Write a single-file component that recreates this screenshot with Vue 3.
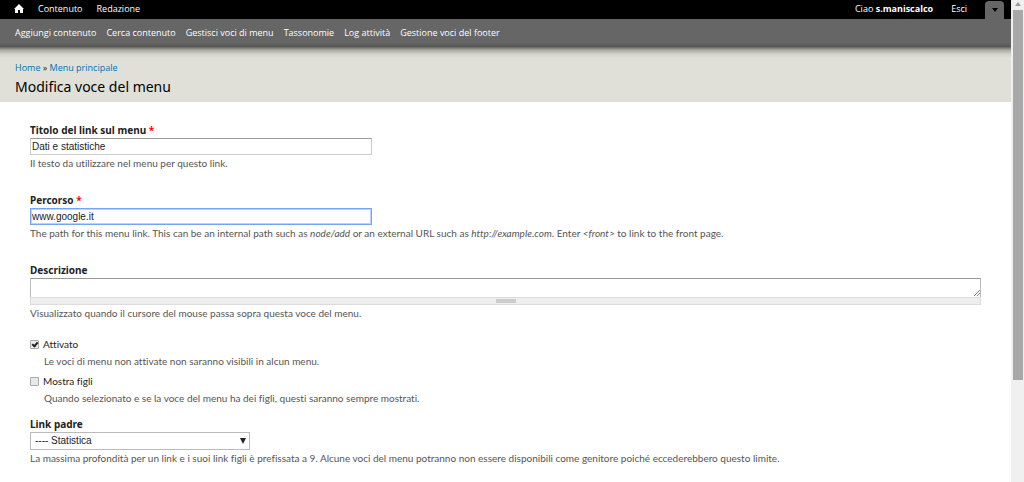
<script setup>
import { ref } from 'vue'

const mainLinks = ['Contenuto', 'Redazione']
const shortcuts = [
  'Aggiungi contenuto',
  'Cerca contenuto',
  'Gestisci voci di menu',
  'Tassonomie',
  'Log attività',
  'Gestione voci del footer',
]
const title = ref('Dati e statistiche')
const path = ref('www.google.it')
const description = ref('')
const enabled = ref(true)
const expanded = ref(false)
const parent = ref('statistica')
</script>

<template>
  <div class="window">
    <div class="page">
      <nav class="toolbar">
        <a class="home" href="#" aria-label="Home">
          <svg width="10" height="9" viewBox="0 0 10 9"><path d="M5 0 0 5h1v4h3V6h2v3h3V5h1z" fill="#fff" /></svg>
        </a>
        <a v-for="l in mainLinks" :key="l" href="#">{{ l }}</a>
        <div class="user">
          <a href="#">Ciao <strong>s.maniscalco</strong></a>
          <a href="#">Esci</a>
          <button class="toggle" type="button" aria-label="Scorciatoie">
            <svg width="6" height="4" viewBox="0 0 6 4"><path d="M0 0h6L3 4z" fill="#000" /></svg>
          </button>
        </div>
      </nav>
      <nav class="drawer">
        <a v-for="s in shortcuts" :key="s" href="#">{{ s }}</a>
      </nav>
      <header class="branding">
        <div class="crumbs"><a href="#">Home</a> » <a href="#">Menu principale</a></div>
        <h1>Modifica voce del menu</h1>
      </header>
      <form class="content" @submit.prevent>
        <div class="item">
          <label class="label" for="title">Titolo del link sul menu <span class="req">*</span></label>
          <input id="title" v-model="title" class="text" type="text" />
          <p class="help">Il testo da utilizzare nel menu per questo link.</p>
        </div>
        <div class="item">
          <label class="label" for="path">Percorso <span class="req">*</span></label>
          <input id="path" v-model="path" class="text active" type="text" />
          <p class="help">The path for this menu link. This can be an internal path such as <em>node/add</em> or an external URL such as <em>http://example.com</em>. Enter <em>&lt;front&gt;</em> to link to the front page.</p>
        </div>
        <div class="item area-item">
          <label class="label" for="description">Descrizione</label>
          <div class="area">
            <textarea id="description" v-model="description" rows="1"></textarea>
            <svg class="corner" width="6" height="6" viewBox="0 0 6 6"><path d="M0 6 6 0M3 6 6 3" stroke="#777" fill="none" /></svg>
            <div class="grippie"><span></span></div>
          </div>
          <p class="help">Visualizzato quando il cursore del mouse passa sopra questa voce del menu.</p>
        </div>
        <div class="check-item">
          <div class="check-row">
            <input id="enabled" v-model="enabled" type="checkbox" />
            <label for="enabled">Attivato</label>
          </div>
          <p class="help">Le voci di menu non attivate non saranno visibili in alcun menu.</p>
        </div>
        <div class="check-item">
          <div class="check-row">
            <input id="expanded" v-model="expanded" type="checkbox" />
            <label for="expanded">Mostra figli</label>
          </div>
          <p class="help">Quando selezionato e se la voce del menu ha dei figli, questi saranno sempre mostrati.</p>
        </div>
        <div class="parent-item">
          <label class="label" for="parent">Link padre</label>
          <div class="select">
            <select id="parent" v-model="parent">
              <option value="statistica">---- Statistica</option>
            </select>
            <svg width="6" height="6" viewBox="0 0 6 6"><path d="M0 0h6L3 6z" fill="#222" /></svg>
          </div>
          <p class="help">La massima profondità per un link e i suoi link figli è prefissata a 9. Alcune voci del menu potranno non essere disponibili come genitore poiché eccederebbero questo limite.</p>
        </div>
      </form>
    </div>
    <div class="scrollbar" aria-hidden="true">
      <svg width="6" height="4" viewBox="0 0 6 4"><path d="M0 4h6L3 0z" fill="#999" /></svg>
      <div class="thumb"></div>
    </div>
  </div>
</template>

<style>
body {
  background: #fff;
}
</style>

<style scoped>
.window {
  display: flex;
  min-height: 100vh;
  font: 10px/14px Lato, "Noto Sans", sans-serif;
  font-variant-ligatures: none;
  color: #222;
}
.page {
  flex: 1;
  min-width: 0;
}
a {
  color: inherit;
  text-decoration: none;
}
.toolbar {
  display: flex;
  align-items: center;
  height: 19px;
  padding: 0 7px 0 14px;
  gap: 14px;
  background: #000;
  color: #fff;
  font: 9px/14px "Open Sans", sans-serif;
}
.toolbar a {
  padding-bottom: 2px;
}
.home svg {
  display: block;
}
.user {
  display: flex;
  align-items: center;
  align-self: stretch;
  gap: 18px;
  margin-left: auto;
}
.toggle {
  display: flex;
  align-items: center;
  justify-content: center;
  align-self: flex-end;
  width: 19px;
  height: 18px;
  padding: 0;
  border: 0;
  border-radius: 4px 4px 0 0;
  background: #666;
}
.drawer {
  display: flex;
  align-items: center;
  gap: 10px;
  height: 28px;
  padding: 0 15px;
  background: linear-gradient(#666 24px, #555);
  color: #fff;
  font: 9px/14px "Open Sans", sans-serif;
}
.branding {
  padding: 14px 15px 4px;
  background: linear-gradient(#66665f, #a8a8a2 3px, #d2d2cb 7px, #e0e0d8 11px);
}
.crumbs {
  font: 9px/14px "Open Sans", sans-serif;
}
.crumbs a {
  color: #0071b3;
}
h1 {
  margin: 1px 0 0;
  font: 14px/22px "Noto Sans", sans-serif;
  color: #000;
}
.content {
  padding: 21px 30px 0;
}
.item {
  margin-bottom: 23px;
}
.area-item {
  margin-bottom: 17px;
}
.label {
  display: block;
  padding-bottom: 1px;
  font: bold 10px/14px "Noto Sans", sans-serif;
}
.req {
  color: #f00;
}
.help {
  margin: 1px 0 0;
  color: #555;
}
.text {
  display: block;
  box-sizing: border-box;
  width: 342px;
  height: 17px;
  padding: 0 1px;
  border: 1px solid #ccc;
  border-top-color: #999;
  outline: 0;
  color: #222;
  font: 10px/14px "Liberation Sans", Arial, sans-serif;
}
.active {
  border-color: #76a4f0;
  box-shadow: inset 0 0 0 1px #bcd2f7;
}
.area {
  position: relative;
}
textarea {
  display: block;
  box-sizing: border-box;
  width: 100%;
  height: 19px;
  padding: 1px 2px;
  border: 1px solid #bbb;
  border-top-color: #999;
  border-bottom: 0;
  outline: 0;
  resize: none;
  overflow: hidden;
  font: 10px/14px "Liberation Sans", Arial, sans-serif;
}
.corner {
  position: absolute;
  right: 1px;
  top: 12px;
}
.grippie {
  display: flex;
  align-items: center;
  justify-content: center;
  box-sizing: border-box;
  height: 8px;
  margin-bottom: 1px;
  border: 1px solid #ddd;
  background: #eee;
}
.grippie span {
  width: 20px;
  height: 4px;
  background: #ccc;
}
.check-item {
  margin-bottom: 6px;
}
.check-row {
  display: flex;
  align-items: center;
  gap: 4px;
}
.check-row input {
  appearance: none;
  position: relative;
  width: 9px;
  height: 9px;
  margin: 0;
  border: 1px solid #aaa;
  border-radius: 1px;
  box-sizing: border-box;
  background: #e8e8e8;
}
.check-row input:checked::after {
  content: "";
  position: absolute;
  left: 2px;
  top: 0;
  width: 2px;
  height: 4px;
  border: solid #222;
  border-width: 0 2px 2px 0;
  transform: rotate(40deg);
}
.check-item .help {
  margin: 3px 0 0 14px;
}
.parent-item {
  margin-top: 12px;
}
.select {
  position: relative;
  width: 220px;
  margin-bottom: 1px;
}
select {
  display: block;
  appearance: none;
  box-sizing: border-box;
  width: 100%;
  height: 18px;
  padding: 0 4px;
  border: 1px solid #bbb;
  border-radius: 0;
  background: #fff;
  color: #222;
  font: 10px/14px "Liberation Sans", Arial, sans-serif;
}
.select svg {
  position: absolute;
  right: 4px;
  top: 6px;
}
.scrollbar {
  display: flex;
  flex-direction: column;
  align-items: center;
  box-sizing: border-box;
  width: 13px;
  padding: 2px 1px 0;
  background: #f0f0f0;
}
.scrollbar svg {
  flex: none;
}
.thumb {
  width: 10px;
  height: 77%;
  margin-top: 4px;
  background: #a8a8a8;
}
</style>
